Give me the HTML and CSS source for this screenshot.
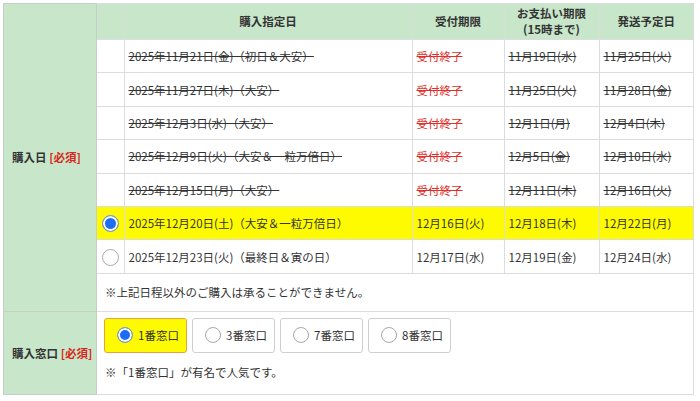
FILE: index.html
```html
<!DOCTYPE html>
<html lang="ja">

<head>
    <meta charset="UTF-8">
    <meta name="viewport" content="width=device-width, initial-scale=1.0">
    <title>購入フォーム</title>
    <link rel="stylesheet" href="styles.css">
</head>

<body>

    <table class="form-table">
        <tr>
            <th class="form-label">購入日 <span class="required">[必須]</span></th>
            <td class="form-body">
                <table class="date-table">
                    <colgroup>
                        <col class="col-radio">
                        <col class="col-date">
                        <col class="col-limit">
                        <col class="col-pay">
                        <col class="col-ship">
                    </colgroup>
                    <tr class="head">
                        <th></th>
                        <th>購入指定日</th>
                        <th>受付期限</th>
                        <th>お支払い期限<br>(15時まで)</th>
                        <th>発送予定日</th>
                    </tr>
                    <tr class="closed">
                        <td></td>
                        <td>2025年11月21日(金)（初日＆大安）</td>
                        <td class="end">受付終了</td>
                        <td>11月19日(水)</td>
                        <td>11月25日(火)</td>
                    </tr>
                    <tr class="closed">
                        <td></td>
                        <td>2025年11月27日(木)（大安）</td>
                        <td class="end">受付終了</td>
                        <td>11月25日(火)</td>
                        <td>11月28日(金)</td>
                    </tr>
                    <tr class="closed">
                        <td></td>
                        <td>2025年12月3日(水)（大安）</td>
                        <td class="end">受付終了</td>
                        <td>12月1日(月)</td>
                        <td>12月4日(木)</td>
                    </tr>
                    <tr class="closed">
                        <td></td>
                        <td>2025年12月9日(火)（大安＆一粒万倍日）</td>
                        <td class="end">受付終了</td>
                        <td>12月5日(金)</td>
                        <td>12月10日(水)</td>
                    </tr>
                    <tr class="closed">
                        <td></td>
                        <td>2025年12月15日(月)（大安）</td>
                        <td class="end">受付終了</td>
                        <td>12月11日(木)</td>
                        <td>12月16日(火)</td>
                    </tr>
                    <tr class="selected">
                        <td class="radio-cell"><span class="radio checked"></span></td>
                        <td>2025年12月20日(土)（大安＆一粒万倍日）</td>
                        <td>12月16日(火)</td>
                        <td>12月18日(木)</td>
                        <td>12月22日(月)</td>
                    </tr>
                    <tr class="open">
                        <td class="radio-cell"><span class="radio"></span></td>
                        <td>2025年12月23日(火)（最終日＆寅の日）</td>
                        <td>12月17日(水)</td>
                        <td>12月19日(金)</td>
                        <td>12月24日(水)</td>
                    </tr>
                </table>
                <p class="note note-date">※上記日程以外のご購入は承ることができません。</p>
            </td>
        </tr>
        <tr>
            <th class="form-label">購入窓口 <span class="required">[必須]</span></th>
            <td class="form-body window-body">
                <div class="window-list">
                    <label class="window-btn active"><span class="radio small checked"></span>1番窓口</label>
                    <label class="window-btn"><span class="radio small"></span>3番窓口</label>
                    <label class="window-btn"><span class="radio small"></span>7番窓口</label>
                    <label class="window-btn"><span class="radio small"></span>8番窓口</label>
                </div>
                <p class="note note-window">※「1番窓口」が有名で人気です。</p>
            </td>
        </tr>
    </table>

</body>

</html>
```

FILE: styles.css
```css
body {
    margin: 0;
    font-family: "Noto Sans CJK JP", "Noto Sans", sans-serif;
    font-size: 11.5px;
    color: #333;
    background: #fff;
}

.form-table {
    margin: 3px 0 0 3px;
    width: 691px;
    border-collapse: collapse;
    border: 1px solid #dcdcdc;
}

.form-label {
    width: 84px;
    padding: 0 0 0 8px;
    background: #c8e6c9;
    border: 1px solid #c5cfc5;
    text-align: left;
    vertical-align: middle;
    font-weight: bold;
    white-space: nowrap;
}

.required {
    color: #d9261c;
}

.form-body {
    padding: 0;
    vertical-align: top;
    border: 1px solid #dcdcdc;
}

.date-table {
    width: 100%;
    border-collapse: collapse;
    border-style: hidden;
    table-layout: fixed;
}

.col-radio {
    width: 27px;
}

.col-date {
    width: 288px;
}

.col-limit {
    width: 92px;
}

.col-pay {
    width: 95px;
}

.col-ship {
    width: 94px;
}

.date-table th,
.date-table td {
    border: 1px solid #dcdcdc;
    padding: 0 4px;
    white-space: nowrap;
}

.date-table th {
    height: 35px;
    background: #c8e6c9;
    font-weight: bold;
    text-align: center;
    line-height: 1.35;
}

.date-table td {
    height: 32.4px;
}

.date-table .radio-cell {
    padding: 0;
    text-align: center;
}

.closed td {
    text-decoration: line-through;
}

.closed td.end {
    color: #e0302a;
}

.selected td {
    background: #fefb00;
}

.radio {
    display: inline-block;
    width: 15px;
    height: 15px;
    border: 1px solid #a8a8a8;
    border-radius: 50%;
    background: #fff;
    vertical-align: middle;
}

.radio.checked {
    border-color: #8a9bb5;
    background: #1b6ef3;
    box-shadow: inset 0 0 0 2px #fff;
}

.radio.small {
    width: 14px;
    height: 14px;
    margin-right: 5px;
}

.note {
    margin: 0;
}

.note-date {
    border-top: 1px solid #dcdcdc;
    padding: 10px 8px 11px;
    line-height: 16px;
}

.window-body {
    padding: 6px 7px 0;
}

.window-list {
    display: flex;
    gap: 5px;
}

.window-btn {
    display: flex;
    align-items: center;
    box-sizing: border-box;
    width: 83px;
    height: 35px;
    padding-left: 12px;
    border: 1px solid #cfcfcf;
    border-radius: 3px;
    background: #fff;
}

.window-btn.active {
    background: #fefb00;
    border-color: #e9a23b;
}

.note-window {
    padding: 11px 0 14px 1px;
    line-height: 16px;
}
```
